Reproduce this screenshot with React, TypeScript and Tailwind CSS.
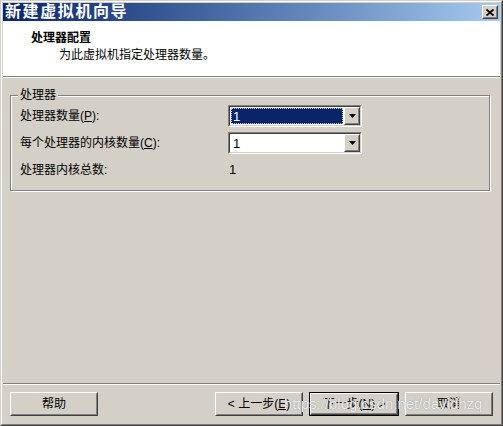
import React from "react";

// Win2000-style "新建虚拟机向导" wizard page (processor configuration).

const font = "font-['Liberation_Sans','Noto_Sans_CJK_SC',sans-serif]";

function Raised({ children, className = "" }: { children: React.ReactNode; className?: string }) {
  return (
    <div className={`border border-t-white border-l-white border-r-[#404040] border-b-[#404040] bg-[#d4d0c8] ${className}`}>
      <div className="flex h-full w-full items-center justify-center border border-t-[#d4d0c8] border-l-[#d4d0c8] border-r-[#808080] border-b-[#808080]">
        {children}
      </div>
    </div>
  );
}

function Combo({ selected }: { selected?: boolean }) {
  return (
    <div className="h-[22px] w-[134px] border border-t-[#808080] border-l-[#808080] border-r-white border-b-white">
      <div className="flex h-full w-full border border-t-[#404040] border-l-[#404040] border-r-[#d4d0c8] border-b-[#d4d0c8] bg-white">
        <div className="flex min-w-0 flex-1 items-center p-px">
          {selected ? (
            <div className="flex h-full w-full items-center border border-dotted border-[#c8c8c8] bg-[#0a246a] pl-px text-[13px] leading-none text-white">
              1
            </div>
          ) : (
            <div className="pl-[2px] text-[13px] leading-none text-black">1</div>
          )}
        </div>
        <Raised className="h-full w-[16px]">
          <svg width="7" height="4" viewBox="0 0 7 4">
            <polygon points="0,0 7,0 3.5,4" fill="#000" />
          </svg>
        </Raised>
      </div>
    </div>
  );
}

function Btn({ label, isDefault }: { label: React.ReactNode; isDefault?: boolean }) {
  const inner = <Raised className="h-full w-full text-[12px] text-black">{label}</Raised>;
  if (isDefault) {
    return <div className="h-[24px] w-[90px] border border-black">{inner}</div>;
  }
  return <div className="h-[24px] w-[88px]">{inner}</div>;
}

export default function App() {
  return (
    <div className={`relative h-[426px] w-[503px] overflow-hidden ${font} select-none`}>
      <div className="h-full w-full border border-t-[#d4d0c8] border-l-[#d4d0c8] border-r-[#404040] border-b-[#404040]">
        <div className="flex h-full w-full flex-col border border-t-white border-l-white border-r-[#808080] border-b-[#808080] bg-[#d4d0c8] p-px">
          {/* title bar */}
          <div className="flex h-[18px] shrink-0 items-center justify-between bg-gradient-to-r from-[#0a246a] to-[#a6caf0] pl-[2px] pr-[2px]">
            <span className="text-[16px] font-bold leading-none tracking-[1.6px] text-white">新建虚拟机向导</span>
            <Raised className="h-[14px] w-[16px]">
              <svg width="8" height="7" viewBox="0 0 8 7">
                <path d="M0.5 0.5 L7.5 6.5 M7.5 0.5 L0.5 6.5" stroke="#000" strokeWidth="1.8" />
              </svg>
            </Raised>
          </div>

          {/* header */}
          <div className="h-[55px] shrink-0 bg-white pt-[9px]">
            <div className="pl-[28px] text-[12px] font-bold leading-[16px] text-black">处理器配置</div>
            <div className="mt-px pl-[56px] text-[12px] leading-[16px] text-black">为此虚拟机指定处理器数量。</div>
          </div>
          <div className="h-px shrink-0 bg-[#808080]" />
          <div className="h-px shrink-0 bg-white" />

          {/* body */}
          <div className="flex flex-1 flex-col">
            <div className="ml-[7px] mr-[10px] mt-[17px]">
              <div className="relative h-[96px] border border-[#808080] shadow-[inset_1px_1px_0_white,1px_1px_0_white]">
                <span className="absolute -top-[9px] left-[7px] bg-[#d4d0c8] px-[2px] text-[12px] leading-[16px] text-black">
                  处理器
                </span>
                <div className="grid grid-cols-[208px_1fr] items-center gap-y-[5px] pl-[9px] pt-[9px] text-[12px] leading-[16px] text-black">
                  <span>
                    处理器数量(<span className="underline">P</span>):
                  </span>
                  <Combo selected />
                  <span>
                    每个处理器的内核数量(<span className="underline">C</span>):
                  </span>
                  <Combo />
                  <span className="mt-[3px]">处理器内核总数:</span>
                  <span className="mt-[3px] pl-px text-[13px]">1</span>
                </div>
              </div>
            </div>

            <div className="mt-auto h-px bg-[#808080]" />
            <div className="h-px bg-white" />
            <div className="flex items-center justify-between px-[7px] pb-[7px] pt-[7px]">
              <Btn label="帮助" />
              <div className="flex items-center gap-[6px]">
                <Btn label={<span>&lt; 上一步(<span className="underline">E</span>)</span>} />
                <Btn isDefault label={<span>下一步(<span className="underline">N</span>) &gt;</span>} />
                <Btn label="取消" />
              </div>
            </div>
          </div>
        </div>
      </div>

      {/* watermark */}
      <span className="pointer-events-none absolute left-[284px] top-[394px] text-[15px] leading-[20px] text-white/85 [text-shadow:0_0_1px_#7a7a7a]">
        https://blog.csdn.net/davidhzq
      </span>
    </div>
  );
}
